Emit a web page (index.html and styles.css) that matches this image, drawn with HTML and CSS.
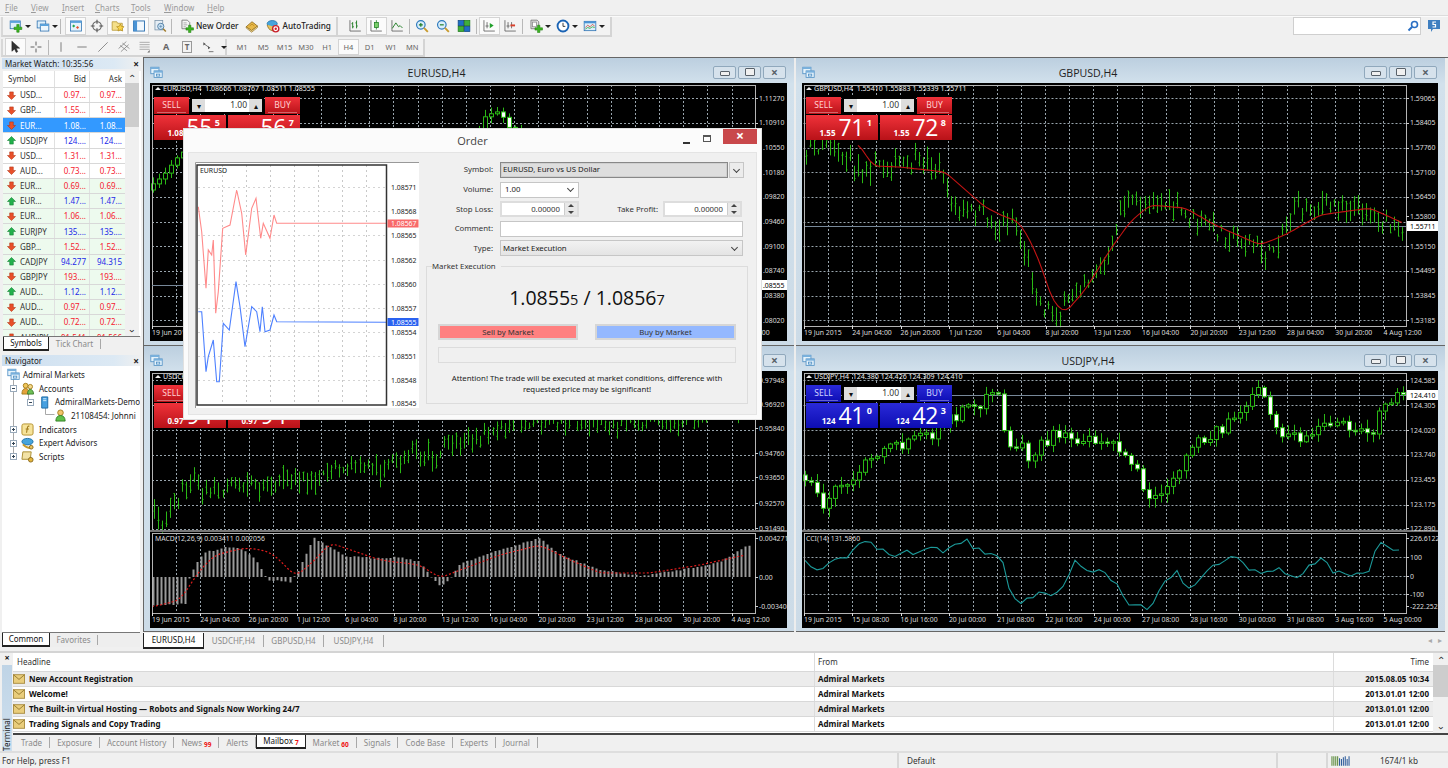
FILE: index.html
```html
<!DOCTYPE html>
<html lang="en">
<head>
<meta charset="utf-8">
<title>MetaTrader 4</title>
<link rel="stylesheet" href="styles.css">
</head>
<body>
<svg class="defs" aria-hidden="true">
  <symbol id="i-up" viewBox="0 0 10 10"><path d="M5 .5 9.500 5H7v4H3V5H.5z" fill="#22b14c" stroke="#0d7a2e" stroke-width=".6"/></symbol>
  <symbol id="i-down" viewBox="0 0 10 10"><path d="M5 9.500 .5 5H3V1h4v4h2.500z" fill="#e8502a" stroke="#b03010" stroke-width=".6"/></symbol>
  <symbol id="i-newchart" viewBox="0 0 18 18"><rect x="1.500" y="2.500" width="13" height="10" fill="#dff0fb" stroke="#2a6fb0"/><rect x="1.500" y="2.500" width="13" height="2.500" fill="#5aa2dc"/><path d="M10 7h3v3.500h3.500v3H13V17h-3v-3.500H6.500v-3H10z" fill="#3cb521" stroke="#1c7d0c" stroke-width=".7"/></symbol>
  <symbol id="i-profile" viewBox="0 0 18 18"><rect x="1.500" y="2.500" width="11" height="9" fill="#dff0fb" stroke="#2a6fb0"/><rect x="5.500" y="6.500" width="11" height="9" fill="#eef7fd" stroke="#2a6fb0"/><rect x="5.500" y="6.500" width="11" height="2.500" fill="#5aa2dc"/></symbol>
  <symbol id="i-watch" viewBox="0 0 18 18"><rect x="2" y="2.500" width="14" height="13" fill="#e6f3fb" stroke="#2a6fb0"/><rect x="2" y="2.500" width="14" height="2.500" fill="#5aa2dc"/><path d="M6 7l2 2-2 2-2-2z" fill="#22a94c"/><path d="M11 9l2 2-2 2-2-2z" fill="#e8502a"/></symbol>
  <symbol id="i-cross" viewBox="0 0 18 18"><circle cx="9" cy="9" r="5.500" fill="none" stroke="#666" stroke-width="1.500"/><path d="M9 1v5M9 12v5M1 9h5M12 9h5" stroke="#555" stroke-width="1.500"/></symbol>
  <symbol id="i-nav" viewBox="0 0 18 18"><path d="M1.500 3.500h6l1 2h6v9h-13z" fill="#f4df8a" stroke="#b59532"/><path d="M12 6.500l1.500 3 3.300.4-2.400 2.300.6 3.300-3-1.600-3 1.600.6-3.300-2.400-2.300 3.300-.4z" fill="#f8d34a" stroke="#ae8414" stroke-width=".8"/></symbol>
  <symbol id="i-term" viewBox="0 0 18 18"><rect x="2" y="2.500" width="14" height="13" fill="#f2f8fd" stroke="#2a6fb0" stroke-width="1.200"/><rect x="2" y="2.500" width="4.500" height="13" fill="#4a93d4"/></symbol>
  <symbol id="i-tester" viewBox="0 0 18 18"><rect x="2.500" y="2" width="10" height="12" fill="#e6eef5" stroke="#7a93a8"/><circle cx="10" cy="9.500" r="4" fill="#cfe6f7" stroke="#4f7da3" stroke-width="1.200"/><path d="M13 12.500l3.500 3.500" stroke="#a07a2a" stroke-width="2"/><path d="M8 9.500h4M10 7.500v4" stroke="#4f7da3" stroke-width=".8"/></symbol>
  <symbol id="i-order" viewBox="0 0 18 18"><path d="M2.500 1.500h7l3 3v8h-10z" fill="#f4f4f4" stroke="#6b6b6b"/><path d="M4.500 5h4M4.500 7.500h5M4.500 10h3" stroke="#9a9a9a"/><path d="M11 8h3v3.300h3.300v3H14V17.500h-3v-3.200H7.700v-3H11z" fill="#3cb521" stroke="#1c7d0c" stroke-width=".7"/></symbol>
  <symbol id="i-book" viewBox="0 0 18 18"><path d="M1.500 10 9 3.500l7 5.500-7.500 6z" fill="#e8b94a" stroke="#8a6414"/><path d="M1.500 10v1.500l7 5.500 7.500-6V9l-7.500 6z" fill="#f6e5a8" stroke="#8a6414" stroke-width=".8"/><path d="M6 9l3-2.500 3 2.500" stroke="#b8871c" fill="none"/></symbol>
  <symbol id="i-auto" viewBox="0 0 18 18"><ellipse cx="8" cy="6" rx="6.500" ry="4" fill="#46a4dc" stroke="#1d6fa6"/><path d="M1.500 7.500c1 3.500 2 6.500 6.500 7.500 3 0 5-1 6-4" fill="#e9c25a" stroke="#8a6a1e"/><circle cx="12.500" cy="12.500" r="4" fill="#fff" stroke="#c9202a" stroke-width="1.800"/><circle cx="12.500" cy="12.500" r="1.500" fill="#c9202a"/></symbol>
  <symbol id="i-bars" viewBox="0 0 18 18"><path d="M2.500 1.500v14h14" fill="none" stroke="#555"/><path d="M6 4v8M4.500 6H6M6 10h1.500M11 2v10M9.500 5H11M11 9h1.500" stroke="#1f7d24" stroke-width="1.200" fill="none"/></symbol>
  <symbol id="i-candle" viewBox="0 0 18 18"><path d="M2.500 1.500v14h14" fill="none" stroke="#555"/><path d="M9.500 1.500v12" stroke="#1f7d24"/><rect x="7" y="4.500" width="5" height="6.500" fill="#7bd06a" stroke="#1f7d24"/></symbol>
  <symbol id="i-line" viewBox="0 0 18 18"><path d="M2.500 1.500v14h14" fill="none" stroke="#555"/><path d="M3 12 7.500 5l3.500 5 2-1.500 3 3" fill="none" stroke="#1f7d24" stroke-width="1.200"/></symbol>
  <symbol id="i-zin" viewBox="0 0 18 18"><circle cx="7.500" cy="7.500" r="5.500" fill="#d9eefc" stroke="#2b78bc" stroke-width="1.500"/><path d="M5 7.500h5M7.500 5v5" stroke="#1f7d24" stroke-width="1.500"/><path d="M11.500 11.500l5 5" stroke="#c79a2c" stroke-width="2.400"/></symbol>
  <symbol id="i-zout" viewBox="0 0 18 18"><circle cx="7.500" cy="7.500" r="5.500" fill="#d9eefc" stroke="#2b78bc" stroke-width="1.500"/><path d="M5 7.500h5" stroke="#1f7d24" stroke-width="1.500"/><path d="M11.500 11.500l5 5" stroke="#c79a2c" stroke-width="2.400"/></symbol>
  <symbol id="i-tile" viewBox="0 0 18 18"><rect x="1.500" y="2" width="7" height="6.500" fill="#1d6fc4" stroke="#124a86"/><rect x="9.500" y="2" width="7" height="6.500" fill="#3fae3a" stroke="#217c1e"/><rect x="1.500" y="9.500" width="7" height="6.500" fill="#3fae3a" stroke="#217c1e"/><rect x="9.500" y="9.500" width="7" height="6.500" fill="#1d6fc4" stroke="#124a86"/></symbol>
  <symbol id="i-scroll" viewBox="0 0 18 18"><path d="M2.500 1.500v14h14" fill="none" stroke="#555"/><path d="M6.500 4v8M4.500 9h4" stroke="#555"/><path d="M10 5l5 3.500-5 3.500z" fill="#22a02c"/></symbol>
  <symbol id="i-shift" viewBox="0 0 18 18"><path d="M2.500 1.500v14h14" fill="none" stroke="#555"/><path d="M6.500 4v8M4.500 9h4" stroke="#555"/><path d="M11 4v8" stroke="#555"/><path d="M9.500 7h6v2.500h-6z" fill="#d8402c"/></symbol>
  <symbol id="i-ind" viewBox="0 0 18 18"><path d="M2.500 1.500h8l2 2v9h-10z" fill="#e3e3e3" stroke="#6b6b6b"/><rect x="4.500" y="4" width="5" height="6" fill="#fff" stroke="#888"/><path d="M11 8h3v3.300h3.300v3H14V17.500h-3v-3.200H7.700v-3H11z" fill="#3cb521" stroke="#1c7d0c" stroke-width=".7"/></symbol>
  <symbol id="i-clock" viewBox="0 0 18 18"><circle cx="9" cy="9" r="7" fill="#fff" stroke="#1a63b4" stroke-width="2.400"/><path d="M9 5v4.500h3" fill="none" stroke="#333" stroke-width="1.200"/></symbol>
  <symbol id="i-tpl" viewBox="0 0 18 18"><rect x="1.500" y="3" width="15" height="12" fill="#dbeffc" stroke="#2a6fb0"/><rect x="1.500" y="3" width="15" height="2.500" fill="#4a93d4"/><path d="M3 11l3-3 3 2 3-3 3 2" fill="none" stroke="#d8402c"/><path d="M3 13l3-2 3 1 3-2 3 1" fill="none" stroke="#27a02c"/></symbol>
  <symbol id="i-arrow" viewBox="0 0 18 18"><path d="M5 1.500v13l3.500-3 2 4.500 2-1-2-4.500h4.500z" fill="#333" stroke="#111" stroke-width=".6"/></symbol>
  <symbol id="i-plus" viewBox="0 0 18 18"><path d="M9 2v5M9 11v5M2 9h5M11 9h5" stroke="#555" stroke-width="1.200"/></symbol>
  <symbol id="i-vline" viewBox="0 0 18 18"><path d="M9 3v12" stroke="#888" stroke-width="1.400"/></symbol>
  <symbol id="i-hline" viewBox="0 0 18 18"><path d="M3 9h12" stroke="#888" stroke-width="1.400"/></symbol>
  <symbol id="i-trend" viewBox="0 0 18 18"><path d="M3 15 15 3" stroke="#888" stroke-width="1.200"/></symbol>
  <symbol id="i-chan" viewBox="0 0 18 18"><path d="M2 11 12 2M5 15 15 6M4 7l9 7M7 4l9 7" stroke="#777" stroke-width=".9"/></symbol>
  <symbol id="i-fib" viewBox="0 0 18 18"><path d="M2 3h13M2 6h13M2 9h13M2 12h13" stroke="#999"/><path d="M12 16l3-3v3z" fill="#666"/></symbol>
  <symbol id="i-shapes" viewBox="0 0 18 18"><path d="M3 3l3 2-3 2zM9 8l3 2-3 2z" fill="#555"/><path d="M4 5l7 5M10 15h6" stroke="#555"/></symbol>
  <symbol id="i-wins" viewBox="0 0 16 16"><rect x="1" y="1.500" width="10" height="8" fill="#e6f3fb" stroke="#4f8fc4"/><rect x="5" y="6" width="10" height="8" fill="#e6f3fb" stroke="#4f8fc4"/><rect x="5" y="6" width="10" height="2.200" fill="#78b0dc"/><rect x="1" y="1.500" width="10" height="2.200" fill="#78b0dc"/><rect x="8" y="10" width="4" height="2.400" fill="none" stroke="#4f8fc4"/></symbol>
  <symbol id="i-mail" viewBox="0 0 14 11"><rect x=".5" y=".5" width="13" height="10" fill="#e9cd7c" stroke="#a58637"/><path d="M.5.500 7 6l6.500-5.500" fill="none" stroke="#8f7428"/></symbol>
  <symbol id="i-users" viewBox="0 0 14 14"><circle cx="5" cy="4" r="2.600" fill="#f0c65a" stroke="#a47c1c"/><path d="M1 13c0-4 1.500-6 4-6s4 2 4 6z" fill="#e5a23a" stroke="#a47c1c"/><circle cx="10" cy="5" r="2.400" fill="#f4d98c" stroke="#a47c1c"/><path d="M7 13c0-3 1-5 3-5s3.500 2 3.500 5z" fill="#6fbf55" stroke="#3e7d2a"/></symbol>
  <symbol id="i-server" viewBox="0 0 14 14"><path d="M4 1h6.500v12H4z" fill="#46a0e0" stroke="#1c6aa4"/><path d="M5.500 3h3.500M5.500 5h3.500" stroke="#d8eefb"/></symbol>
  <symbol id="i-user" viewBox="0 0 14 14"><circle cx="7" cy="4" r="3" fill="#f2c46a" stroke="#a47c1c"/><path d="M2 13c0-4 2-6 5-6s5 2 5 6z" fill="#5fc04a" stroke="#337f25"/></symbol>
  <symbol id="i-func" viewBox="0 0 14 14"><rect x="1" y="1" width="12" height="12" rx="2" fill="#f6e39a" stroke="#b28f2a"/><path d="M9 3.500C7.500 3 7 4 6.800 5.500L6 10.500" fill="none" stroke="#9a7416" stroke-width="1.100"/><path d="M5 6.500h3.500" stroke="#9a7416"/></symbol>
  <symbol id="i-ea" viewBox="0 0 14 14"><ellipse cx="7" cy="5" rx="6" ry="3.500" fill="#46a4dc" stroke="#1d6fa6"/><path d="M2 8c2 2 4 4 8 4" fill="none" stroke="#c79a2c" stroke-width="2"/><circle cx="11" cy="11" r="2" fill="#e9c25a" stroke="#8a6a1e"/></symbol>
  <symbol id="i-script" viewBox="0 0 14 14"><path d="M2 2h9l-1 8H1z" fill="#f2e2a6" stroke="#a88a2e"/><circle cx="10.500" cy="10.500" r="2.500" fill="#e5b63c" stroke="#8a6a1e"/></symbol>
</svg>

<nav class="menu">
  <span><u>F</u>ile</span><span><u>V</u>iew</span><span><u>I</u>nsert</span><span><u>C</u>harts</span><span><u>T</u>ools</span><span><u>W</u>indow</span><span><u>H</u>elp</span>
</nav>

<div class="toolrow">
  <div class="tb tb-a">
    <svg class="ti"><use href="#i-newchart"/></svg><i class="drop"></i>
    <svg class="ti t2"><use href="#i-profile"/></svg><i class="drop"></i><b class="sep"></b>
    <span class="btn on"><svg class="ti"><use href="#i-watch"/></svg></span>
    <span class="btn"><svg class="ti"><use href="#i-cross"/></svg></span>
    <span class="btn on"><svg class="ti"><use href="#i-nav"/></svg></span>
    <span class="btn on"><svg class="ti"><use href="#i-term"/></svg></span>
    <span class="btn"><svg class="ti"><use href="#i-tester"/></svg></span><b class="sep"></b>
    <span class="labeled"><svg class="ti"><use href="#i-order"/></svg>New Order</span>
    <span class="btn"><svg class="ti"><use href="#i-book"/></svg></span>
    <span class="labeled la2"><svg class="ti"><use href="#i-auto"/></svg>AutoTrading</span>
  </div>
  <div class="tb tb-b">
    <span class="btn"><svg class="ti"><use href="#i-bars"/></svg></span>
    <span class="btn on"><svg class="ti"><use href="#i-candle"/></svg></span>
    <span class="btn"><svg class="ti"><use href="#i-line"/></svg></span><b class="sep"></b>
    <span class="btn"><svg class="ti"><use href="#i-zin"/></svg></span>
    <span class="btn"><svg class="ti"><use href="#i-zout"/></svg></span>
    <span class="btn"><svg class="ti"><use href="#i-tile"/></svg></span><b class="sep"></b>
    <span class="btn on"><svg class="ti"><use href="#i-scroll"/></svg></span>
    <span class="btn"><svg class="ti"><use href="#i-shift"/></svg></span><b class="sep"></b>
    <svg class="ti t2"><use href="#i-ind"/></svg><i class="drop"></i>
    <svg class="ti t2"><use href="#i-clock"/></svg><i class="drop"></i>
    <svg class="ti t2"><use href="#i-tpl"/></svg><i class="drop"></i>
  </div>
  <div class="search">
    <div class="search-box"><svg class="mag" viewBox="0 0 12 12"><circle cx="7.500" cy="4.500" r="3" fill="#fff" stroke="#2a6fc4" stroke-width="1.600"/><path d="M5 7 1.500 10.500" stroke="#2a6fc4" stroke-width="2"/></svg></div>
    <svg class="chat" viewBox="0 0 14 14"><path d="M1 1h12v9H6l-2 3v-3H1z" fill="#3f7fc0"/><path d="M9 3H6v2.500h2.500V8H5.500" fill="none" stroke="#fff" stroke-width="1.200"/></svg>
  </div>
</div>

<div class="toolrow row2">
  <div class="tb tb-c">
    <span class="btn on"><svg class="ti"><use href="#i-arrow"/></svg></span>
    <span class="btn"><svg class="ti"><use href="#i-plus"/></svg></span><b class="sep"></b>
    <span class="btn"><svg class="ti"><use href="#i-vline"/></svg></span>
    <span class="btn"><svg class="ti"><use href="#i-hline"/></svg></span>
    <span class="btn"><svg class="ti"><use href="#i-trend"/></svg></span>
    <span class="btn"><svg class="ti"><use href="#i-chan"/></svg></span>
    <span class="btn"><svg class="ti"><use href="#i-fib"/></svg></span>
    <span class="btn tx">A</span>
    <span class="btn tx boxed"><em>T</em></span>
    <span class="btn"><svg class="ti"><use href="#i-shapes"/></svg></span><i class="drop"></i>
  </div>
  <div class="tb tb-d">
    <span class="tf">M1</span><span class="tf">M5</span><span class="tf">M15</span><span class="tf">M30</span><span class="tf">H1</span><span class="tf on">H4</span><span class="tf">D1</span><span class="tf">W1</span><span class="tf">MN</span>
  </div>
</div>

<main class="main">
  <aside class="left">
    <section class="watch">
      <div class="dock-title"><span>Market Watch: 10:35:56</span><b>×</b></div>
      <div class="watch-body">
        <div class="mw">
          <div class="mw-row mw-head"><span class="c1">Symbol</span><span class="c2">Bid</span><span class="c3">Ask</span></div>
          <div class="mw-row dn"><span class="c1"><svg class="ar"><use href="#i-down"/></svg>USD...</span><span class="c2">0.97...</span><span class="c3">0.97...</span></div>
          <div class="mw-row dn"><span class="c1"><svg class="ar"><use href="#i-down"/></svg>GBP...</span><span class="c2">1.55...</span><span class="c3">1.55...</span></div>
          <div class="mw-row sel"><span class="c1"><svg class="ar"><use href="#i-down"/></svg>EUR...</span><span class="c2">1.08...</span><span class="c3">1.08...</span></div>
          <div class="mw-row upx"><span class="c1"><svg class="ar"><use href="#i-up"/></svg>USDJPY</span><span class="c2">124....</span><span class="c3">124....</span></div>
          <div class="mw-row dn"><span class="c1"><svg class="ar"><use href="#i-down"/></svg>USD...</span><span class="c2">1.31...</span><span class="c3">1.31...</span></div>
          <div class="mw-row dn"><span class="c1"><svg class="ar"><use href="#i-down"/></svg>AUD...</span><span class="c2">0.73...</span><span class="c3">0.73...</span></div>
          <div class="mw-row dn gr"><span class="c1"><svg class="ar"><use href="#i-down"/></svg>EUR...</span><span class="c2">0.69...</span><span class="c3">0.69...</span></div>
          <div class="mw-row upx gr"><span class="c1"><svg class="ar"><use href="#i-up"/></svg>EUR...</span><span class="c2">1.47...</span><span class="c3">1.47...</span></div>
          <div class="mw-row dn gr"><span class="c1"><svg class="ar"><use href="#i-down"/></svg>EUR...</span><span class="c2">1.06...</span><span class="c3">1.06...</span></div>
          <div class="mw-row upx gr"><span class="c1"><svg class="ar"><use href="#i-up"/></svg>EURJPY</span><span class="c2">135....</span><span class="c3">135....</span></div>
          <div class="mw-row dn gr"><span class="c1"><svg class="ar"><use href="#i-down"/></svg>GBP...</span><span class="c2">1.52...</span><span class="c3">1.52...</span></div>
          <div class="mw-row upx gr"><span class="c1"><svg class="ar"><use href="#i-up"/></svg>CADJPY</span><span class="c2">94.277</span><span class="c3">94.315</span></div>
          <div class="mw-row dn gr"><span class="c1"><svg class="ar"><use href="#i-down"/></svg>GBPJPY</span><span class="c2">193....</span><span class="c3">193....</span></div>
          <div class="mw-row upx gr"><span class="c1"><svg class="ar"><use href="#i-up"/></svg>AUD...</span><span class="c2">1.12...</span><span class="c3">1.12...</span></div>
          <div class="mw-row dn gr"><span class="c1"><svg class="ar"><use href="#i-down"/></svg>AUD...</span><span class="c2">0.97...</span><span class="c3">0.97...</span></div>
          <div class="mw-row dn gr"><span class="c1"><svg class="ar"><use href="#i-down"/></svg>AUD...</span><span class="c2">0.72...</span><span class="c3">0.72...</span></div>
          <div class="mw-row dn gr"><span class="c1"><svg class="ar"><use href="#i-down"/></svg>AUDJPY</span><span class="c2">91.541</span><span class="c3">91.566</span></div>
        </div>
        <div class="vscroll mw-scroll"><span class="chev">⌃</span><span class="thumb"></span><span class="chev dnc">⌃</span></div>
      </div>
      <div class="tabs dock-tabs"><span class="tab on">Symbols</span><span class="tab">Tick Chart</span><span class="tab-end"></span></div>
    </section>
    <section class="navigator">
      <div class="dock-title"><span>Navigator</span><b>×</b></div>
      <div class="tree">
        <svg class="tree-lines" viewBox="0 0 138 100"><path d="M11.500 12v76M11.500 20.500h2M26.500 27v6.500h3M43.500 40v7.500h9M11.500 61.500h2M11.500 75h2M11.500 88.500h2" fill="none" stroke="#a8a8a8"/></svg>
        <div class="node n0"><svg class="ni"><use href="#i-wins"/></svg>Admiral Markets</div>
        <div class="node n1"><i class="box minus"></i><svg class="ni"><use href="#i-users"/></svg>Accounts</div>
        <div class="node n2"><i class="box minus"></i><svg class="ni"><use href="#i-server"/></svg>AdmiralMarkets-Demo</div>
        <div class="node n3"><svg class="ni"><use href="#i-user"/></svg>21108454: Johnni</div>
        <div class="node n1"><i class="box plus"></i><svg class="ni"><use href="#i-func"/></svg>Indicators</div>
        <div class="node n1"><i class="box plus"></i><svg class="ni"><use href="#i-ea"/></svg>Expert Advisors</div>
        <div class="node n1"><i class="box plus"></i><svg class="ni"><use href="#i-script"/></svg>Scripts</div>
      </div>
      <div class="tabs nav-tabs"><span class="tab on">Common</span><span class="tab">Favorites</span><span class="tab-end"></span></div>
    </section>
  </aside>

  <div class="work">
    <div class="mdi">
      <section class="win">
        <header class="win-title"><svg class="win-ic"><use href="#i-wins"/></svg><span>EURUSD,H4</span><div class="win-btns"><i class="wb wb-min"></i><i class="wb wb-max"></i><i class="wb wb-x">×</i></div></header>
        <div class="chart"><svg class="plot" id="c1"></svg>
          <div class="trade red">
            <span class="side">SELL</span><span class="spin"><i>▾</i><em>1.00</em><i>▴</i></span><span class="side">BUY</span>
            <span class="quote q1"><small>1.08</small><big>55</big><sup>5</sup></span><span class="quote q2"><small>1.08</small><big>56</big><sup>7</sup></span>
          </div>
        </div>
      </section>
      <section class="win">
        <header class="win-title"><svg class="win-ic"><use href="#i-wins"/></svg><span>GBPUSD,H4</span><div class="win-btns"><i class="wb wb-min"></i><i class="wb wb-max"></i><i class="wb wb-x">×</i></div></header>
        <div class="chart"><svg class="plot" id="c2"></svg>
          <div class="trade red">
            <span class="side">SELL</span><span class="spin"><i>▾</i><em>1.00</em><i>▴</i></span><span class="side">BUY</span>
            <span class="quote q1"><small>1.55</small><big>71</big><sup>1</sup></span><span class="quote q2"><small>1.55</small><big>72</big><sup>8</sup></span>
          </div>
        </div>
      </section>
      <section class="win low">
        <header class="win-title"><svg class="win-ic"><use href="#i-wins"/></svg><span>USDCHF,H4</span><div class="win-btns"><i class="wb wb-min"></i><i class="wb wb-max"></i><i class="wb wb-x">×</i></div></header>
        <div class="chart"><svg class="plot" id="c3"></svg>
          <div class="trade red">
            <span class="side">SELL</span><span class="spin"><i>▾</i><em>1.00</em><i>▴</i></span><span class="side">BUY</span>
            <span class="quote q1"><small>0.97</small><big>94</big><sup>1</sup></span><span class="quote q2"><small>0.97</small><big>94</big><sup>8</sup></span>
          </div>
        </div>
      </section>
      <section class="win low">
        <header class="win-title"><svg class="win-ic"><use href="#i-wins"/></svg><span>USDJPY,H4</span><div class="win-btns"><i class="wb wb-min"></i><i class="wb wb-max"></i><i class="wb wb-x">×</i></div></header>
        <div class="chart"><svg class="plot" id="c4"></svg>
          <div class="trade blue">
            <span class="side">SELL</span><span class="spin"><i>▾</i><em>1.00</em><i>▴</i></span><span class="side">BUY</span>
            <span class="quote q1"><small>124</small><big>41</big><sup>0</sup></span><span class="quote q2"><small>124</small><big>42</big><sup>3</sup></span>
          </div>
        </div>
      </section>
    </div>
    <div class="tabs chart-tabs"><span class="tab on">EURUSD,H4</span><span class="tab">USDCHF,H4</span><span class="tab">GBPUSD,H4</span><span class="tab">USDJPY,H4</span><span class="tab-end"></span><span class="pager">◂ &nbsp; ▸</span></div>
  </div>
</main>

<section class="terminal">
  <div class="term-side"><b>×</b><span>Terminal</span></div>
  <div class="term-main">
    <div class="term-list">
      <div class="term-table">
        <div class="tr th"><span class="t1">Headline</span><span class="t2c">From</span><span class="t3">Time</span></div>
        <div class="tr g"><span class="t1"><svg class="mail"><use href="#i-mail"/></svg>New Account Registration</span><span class="t2c">Admiral Markets</span><span class="t3">2015.08.05 10:34</span></div>
        <div class="tr"><span class="t1"><svg class="mail"><use href="#i-mail"/></svg>Welcome!</span><span class="t2c">Admiral Markets</span><span class="t3">2013.01.01 12:00</span></div>
        <div class="tr g"><span class="t1"><svg class="mail"><use href="#i-mail"/></svg>The Built-in Virtual Hosting — Robots and Signals Now Working 24/7</span><span class="t2c">Admiral Markets</span><span class="t3">2013.01.01 12:00</span></div>
        <div class="tr"><span class="t1"><svg class="mail"><use href="#i-mail"/></svg>Trading Signals and Copy Trading</span><span class="t2c">Admiral Markets</span><span class="t3">2013.01.01 12:00</span></div>
      </div>
      <div class="vscroll term-scroll"><span class="chev">⌃</span><span class="thumb"></span><span class="chev dnc">⌃</span></div>
    </div>
    <div class="tabs term-tabs">
      <span class="tab">Trade</span><span class="tab">Exposure</span><span class="tab">Account History</span><span class="tab">News<sub>99</sub></span><span class="tab">Alerts</span><span class="tab on">Mailbox<sub>7</sub></span><span class="tab">Market<sub>60</sub></span><span class="tab">Signals</span><span class="tab">Code Base</span><span class="tab">Experts</span><span class="tab">Journal</span>
    </div>
  </div>
</section>

<footer class="status">
  <span class="st-help">For Help, press F1</span>
  <span class="st-profile">Default</span>
  <span class="st-gap"></span>
  <span class="st-conn"><svg class="st-bars" viewBox="0 0 20 10"><path d="M1 0v10M3 0v10M5 0v10M7 0v10" stroke="#5a8a3a" stroke-width="1.100"/><path d="M9 2v8M11 3v7M13 1v9M15 0v10M17 3v7M19 0v10" stroke="#2a5a9a" stroke-width="1.100"/></svg></span>
  <span class="st-kb">1674/1 kb</span>
</footer>

<div class="dialog">
  <div class="dlg-title"><span>Order</span>
    <div class="dlg-ctl"><i class="d-min"></i><i class="d-max"></i><i class="d-x">×</i></div>
  </div>
  <div class="dlg-body">
    <svg class="tick" id="tick" viewBox="195 162 224 246"></svg>
    <form class="form">
      <div class="frow"><label>Symbol:</label><div class="fld sym"><span>EURUSD, Euro vs US Dollar</span></div><div class="capbox"><i class="caret"></i></div></div>
      <div class="frow"><label>Volume:</label><div class="fld vol"><span>1.00</span><i class="caret"></i></div></div>
      <div class="frow"><label>Stop Loss:</label><div class="fld num"><span>0.00000</span><i class="spinb"></i></div><label class="lbl2">Take Profit:</label><div class="fld num"><span>0.00000</span><i class="spinb"></i></div></div>
      <div class="frow"><label>Comment:</label><div class="fld wide"></div></div>
      <div class="frow"><label>Type:</label><div class="fld wide typ"><span>Market Execution</span><i class="caret"></i></div></div>
      <fieldset class="exec">
        <legend>Market Execution</legend>
        <div class="price">1.0855<small>5</small> / 1.0856<small>7</small></div>
        <div class="act"><span class="do sell">Sell by Market</span><span class="do buy">Buy by Market</span></div>
        <div class="progress"></div>
        <p class="attn">Attention! The trade will be executed at market conditions, difference with<br>requested price may be significant!</p>
      </fieldset>
    </form>
  </div>
</div>

<script src="charts.js"></script>
</body>
</html>
```
FILE: styles.css
```css
* { box-sizing: border-box; }
html, body { margin: 0; padding: 0; }
body {
  position: relative;
  width: 1448px;
  height: 768px;
  overflow: hidden;
  background: #f0f0f0;
  font: 8px/1.2 "Noto Sans", Tahoma, sans-serif;
  color: #111;
  display: flex;
  flex-direction: column;
}
.defs { position: absolute; width: 0; height: 0; }

/* menu */
.menu {
  height: 16px;
  display: flex;
  align-items: center;
  padding-left: 5px;
  color: #9a9a9a;
  font-size: 8px;
  border-bottom: 1px solid #dcdcdc;
}
.menu u { text-decoration-thickness: 1px; }
.menu span:nth-child(1) { width: 26px; }
.menu span:nth-child(2) { width: 31px; }
.menu span:nth-child(3) { width: 33px; }
.menu span:nth-child(4) { width: 36px; }
.menu span:nth-child(5) { width: 33px; }
.menu span:nth-child(6) { width: 43px; }

/* toolbars */
.toolrow {
  height: 21px;
  display: flex;
  align-items: stretch;
  padding-left: 1px;
  border-top: 1px solid #fafafa;
}
.row2 { height: 20px; border-top: 0; padding-top: 2px; }
.tb {
  display: flex;
  align-items: center;
  flex: none;
  border-right: 2px solid #d4d4d4;
  border-bottom: 2px solid #d4d4d4;
  border-left: 2px solid #d8d8d8;
  background: #f3f3f3;
}
.tb-a { width: 337px; padding-left: 6px; }
.tb-b { width: 274px; padding-left: 6.5px; border-left: 0; }
.tb-c { width: 226px; padding-left: 1.5px; }
.tb-d { width: 198px; padding-left: 4.3px; border-left: 0; }
.ti { width: 14px; height: 14px; display: block; flex: none; }
.t2 { margin-left: 4px; }
.btn {
  width: 21px;
  height: 18px;
  display: flex;
  align-items: center;
  justify-content: center;
  flex: none;
}
.btn.on, .tf.on {
  background: #fbfbfb;
  outline: 1px solid #d4d4d4;
  outline-offset: -1px;
}
.drop {
  width: 0; height: 0; flex: none;
  margin: 0 1px 0 2px;
  border-left: 3px solid transparent;
  border-right: 3px solid transparent;
  border-top: 3px solid #222;
}
.sep { width: 1px; height: 15px; background: #b8b8b8; margin: 0 2px 0 1px; flex: none; }
.tb-a .sep { margin-right: 4px; }
.labeled { display: flex; align-items: center; gap: 2px; font-size: 8.2px; font-weight: 500; color: #222; padding: 0 3px 0 4px; white-space: nowrap; flex: none; }
.la2 { padding-left: 3px; gap: 3px; }
.tx { color: #666; font-size: 9px; font-weight: 700; }
.boxed em { font-style: normal; border: 1px solid #999; padding: 0 2px; font-size: 8px; line-height: 10px; }
.tf { width: 21.3px; height: 16px; display: flex; align-items: center; justify-content: center; color: #666; font-size: 7.5px; flex: none; }
.search { margin-left: auto; display: flex; align-items: center; gap: 6px; padding: 0 7px 2px 0; }
.search-box { width: 128px; height: 18px; background: #fff; border: 1px solid #cfcfcf; display: flex; align-items: center; justify-content: flex-end; padding-right: 1px; }
.mag { width: 12px; height: 12px; }
.chat { width: 14px; height: 14px; }

/* main */
.main { height: 594px; flex: none; display: flex; }
.left { width: 142px; flex: none; display: flex; flex-direction: column; padding-left: 1px; }
.work { flex: 1; min-width: 0; display: flex; flex-direction: column; padding-left: 1px; }
.dock-title {
  height: 11px;
  flex: none;
  display: flex;
  justify-content: space-between;
  align-items: center;
  padding: 0 1px 0 3px;
  margin: 1px 0 2px 1px;
  background: linear-gradient(90deg, #cddff0 0, #dce9f4 80%, #f0f0f0 100%);
  color: #222;
  font-size: 8px;
  white-space: nowrap;
}
.dock-title b { font-size: 10px; line-height: 10px; width: 10px; text-align: center; }

/* market watch */
.watch { height: 295px; flex: none; display: flex; flex-direction: column; }
.watch-body { display: flex; margin: 0 1px 0 2px; height: 265px; flex: none; overflow: hidden; background: #fff; }
.mw { width: 122px; flex: none; overflow: hidden; }
.mw-row { display: flex; height: 15.15px; align-items: center; border-bottom: 1px solid #d8d8d8; font-size: 8px; white-space: nowrap; background: #fff; }
.mw-row.gr { background: #edfaee; }
.mw-head { height: 17px; color: #333; background: #fff; }
.mw-row span { display: flex; align-items: center; height: 100%; border-right: 1px solid #e0e0e0; }
.c1 { width: 52px; padding-left: 1px; color: #333; }
.mw-head .c1 { padding-left: 5px; }
.c2 { width: 35px; justify-content: flex-end; padding-right: 3px; }
.c3 { width: 35px; justify-content: flex-end; padding-right: 3px; border-right: 0 !important; }
.ar { width: 9px; height: 9px; margin: 0 4px 0 3px; flex: none; }
.dn .c2, .dn .c3 { color: #f5202e; }
.upx .c2, .upx .c3 { color: #2228e8; }
.sel { background: #3399ff; }
.sel span { color: #fff !important; border-right-color: #3399ff; }
.vscroll { display: flex; flex-direction: column; align-items: center; background: #f0f0f0; flex: none; }
.chev { height: 12px; font-size: 10px; line-height: 14px; color: #333; }
.dnc { transform: rotate(180deg); }
.thumb { background: #cdcdcd; width: 100%; }
.mw-scroll { width: 14px; height: 265px; }
.mw-scroll .thumb { height: 44px; }
.mw-scroll .dnc { margin-top: auto; }

/* tabs */
.tabs { display: flex; align-items: stretch; color: #8a8a8a; white-space: nowrap; flex: none; }
.tab { display: flex; align-items: center; justify-content: center; border-right: 1px solid #a8a8a8; margin: 2px 0; }
.tab.on { margin: 0; background: #fff; color: #111; border: 1px solid #222; border-top: 0; border-bottom-width: 2px; }
.dock-tabs { height: 15px; margin: 0 2px; border-top: 1px solid #777; font-size: 8px; }
.dock-tabs .tab { width: 46px; }
.dock-tabs .tab + .tab { width: 52px; }

/* navigator */
.navigator { height: 299px; flex: none; display: flex; flex-direction: column; }
.navigator .dock-title { margin-top: 3px; margin-bottom: 0; }
.tree { position: relative; flex: 1; background: #fff; margin: 0 2px 0 1px; padding-top: 2px; font-size: 8px; overflow: hidden; color: #222; }
.tree-lines { position: absolute; left: 0; top: 1px; width: 138px; height: 100px; }
.node { position: relative; height: 13.67px; display: flex; align-items: center; white-space: nowrap; }
.n0 { padding-left: 5px; }
.n1 { padding-left: 8px; }
.n2 { padding-left: 25px; }
.n3 { padding-left: 52px; }
.ni { width: 13px; height: 13px; margin-right: 5px; flex: none; }
.n0 .ni { margin-right: 3px; }
.n2 .ni, .n3 .ni { margin-right: 4px; }
.box { width: 7px; height: 7px; border: 1px solid #9ab; background: #fff; margin-right: 4px; flex: none; position: relative; }
.box::before { content: ""; position: absolute; left: 1px; top: 2px; width: 3px; height: 1px; background: #345; }
.box.plus::after { content: ""; position: absolute; left: 2px; top: 1px; width: 1px; height: 3px; background: #345; }
.nav-tabs { height: 15px; margin: 0 2px 4px 1px; font-size: 8px; background: #eee; border-top: 1px solid #777; }
.nav-tabs .tab { width: 48px; }

/* mdi */
.mdi {
  height: 575px;
  flex: none;
  display: grid;
  grid-template-columns: 652px 652px;
  grid-template-rows: 288px 286px;
  background: #ededed;
  border-top: 1px solid #666;
  border-left: 1px solid #666;
}
.win {
  background: linear-gradient(180deg, #bccfdf 0, #d2e1ec 26px, #ccdbe7 100%);
  padding: 0 7px 4px 6px;
  margin-right: 2px;
  border-bottom: 1px solid #666;
  display: flex;
  flex-direction: column;
  min-height: 0;
}
.win:nth-child(even) { padding-right: 7px; margin-right: 3px; }
.win.low { padding-bottom: 3px; }
.win-title { height: 25px; flex: none; position: relative; display: flex; align-items: center; justify-content: center; padding: 4px 64px 0 0; font: 10.6px "Open Sans", sans-serif; color: #222; }
.win-ic { position: absolute; left: 0; top: 8px; width: 13px; height: 13px; }
.win-btns { position: absolute; right: 1px; top: 8px; display: flex; gap: 2px; }
.wb { width: 23px; height: 13px; border: 1px solid #90a8bc; border-radius: 2px; background: #d6e2ec; display: flex; align-items: center; justify-content: center; font-style: normal; color: #58616a; font-size: 12px; line-height: 10px; font-weight: 700; }
.wb-min::before { content: ""; width: 8px; height: 3px; margin-top: 2px; border: 1px solid #58616a; background: #f0f0f0; border-radius: 1px; }
.wb-max::before { content: ""; width: 8px; height: 6px; margin-top: -2px; border: 1px solid #58616a; background: #f0f0f0; border-radius: 1px; }
.chart { position: relative; flex: 1; background: #000; overflow: hidden; min-height: 0; }
.plot { display: block; width: 100%; height: 100%; font-family: "Noto Sans", Tahoma, sans-serif; }
.trade { position: absolute; left: 4px; top: 14px; width: 146px; display: grid; grid-template-columns: 36px 37px 37px 36px; grid-template-rows: 17px 26px; color: #fff; }
.side { display: flex; align-items: center; justify-content: center; font-size: 8.5px; color: #ffd0d0; position: relative; margin-right: 1px; }
.trade .side:nth-child(3) { margin: 0 0 0 1px; grid-column: 4; }
.side::after { content: ""; position: absolute; left: 3px; right: 3px; bottom: 1px; height: 1px; background: rgba(255,255,255,.35); }
.red .side, .red .quote { background: linear-gradient(180deg, #f0323a, #b81218); }
.blue .side, .blue .quote { background: linear-gradient(180deg, #2a2ad8, #0d0db4); }
.blue .side { color: #cfd4ff; }
.spin { grid-column: 2 / span 2; display: flex; background: #fff; border: 2px solid #000; align-items: center; color: #333; }
.spin i { width: 13px; height: 100%; background: #ddd; display: flex; align-items: center; justify-content: center; font-style: normal; font-size: 8px; color: #111; }
.spin em { flex: 1; text-align: right; padding-right: 2px; font-style: normal; font-size: 8.5px; }
.quote { margin-top: 1px; height: 25px; display: flex; align-items: baseline; justify-content: flex-end; line-height: 25px; font-family: "Open Sans", sans-serif; padding-right: 6px; }
.q1 { grid-column: 1 / span 2; margin-right: 1px; }
.q2 { grid-column: 3 / span 2; margin-left: 1px; }
.quote small { font-size: 8px; font-weight: 700; margin-right: 3px; }
.quote big { font-size: 23px; line-height: 25px; letter-spacing: -.5px; }
.quote sup { font-size: 9px; font-weight: 700; line-height: 10px; align-self: flex-start; margin: 3px 0 0 3px; }

.chart-tabs { height: 19px; font-size: 8px; padding: 1px 0 2px; }
.chart-tabs .tab { width: 60px; }
.chart-tabs .tab.on { width: 61px; }
.pager { margin-left: auto; padding: 2px 6px 0; color: #aaa; font-size: 8px; }

/* terminal */
.terminal { height: 100px; flex: none; display: flex; border-top: 2px solid #d4d4d4; }
.term-side { width: 12px; flex: none; display: flex; flex-direction: column; align-items: center; margin-left: 1px; }
.term-side b { font-size: 9px; height: 12px; line-height: 10px; width: 11px; text-align: center; }
.term-side span { flex: 1; width: 10px; background: linear-gradient(180deg, #cfe0ee, #bfd4e6); writing-mode: vertical-rl; transform: rotate(180deg); font-size: 8px; color: #222; line-height: 10px; text-align: left; }
.term-main { flex: 1; display: flex; flex-direction: column; min-width: 0; }
.term-list { height: 82px; flex: none; display: flex; background: #fff; border-bottom: 2px solid #444; overflow: hidden; }
.term-table { flex: 1; min-width: 0; }
.tr { display: flex; height: 15px; align-items: center; font-weight: 700; font-size: 8px; border-bottom: 1px solid #d8d8d8; color: #111; white-space: nowrap; }
.tr.g { background: #ececec; }
.th { height: 19px; font-weight: 400; color: #333; }
.t1 { width: 801px; display: flex; align-items: center; height: 100%; }
.th .t1 { padding-left: 4px; }
.t2c { width: 519px; padding-left: 3px; height: 100%; display: flex; align-items: center; border-left: 1px solid #dcdcdc; }
.t3 { flex: 1; padding-right: 4px; height: 100%; display: flex; align-items: center; justify-content: flex-end; border-left: 1px solid #dcdcdc; }
.mail { width: 12px; height: 10px; margin-right: 4px; flex: none; }
.term-scroll { width: 15px; }
.term-scroll .thumb { height: 32px; }
.term-scroll .dnc { margin-top: auto; }
.term-tabs { height: 16px; font-size: 8px; }
.term-tabs .tab { padding: 0 7px; margin: 2px 0 3px; height: 11px; align-self: center; }
.term-tabs .tab:first-child { padding-left: 8px; }
.term-tabs .tab.on { height: 14px; padding: 0 6px; margin: 0; align-self: flex-start; border-top: 0; }
.tab sub { color: #ef1010; font-size: 6.5px; font-weight: 700; margin-left: 2px; vertical-align: baseline; position: relative; top: 2px; }

/* status */
.status { flex: 1; display: flex; align-items: center; font-size: 8.2px; color: #333; border-top: 2px solid #dedede; }
.status > span { height: 100%; display: flex; align-items: center; }
.st-help { width: 897px; padding-left: 2px; }
.st-profile { width: 379px; padding-left: 8px; border-left: 2px solid #d8d8d8; }
.st-gap { width: 50px; border-left: 2px solid #d8d8d8; }
.st-conn { width: 54px; padding-left: 3px; border-left: 2px solid #d8d8d8; }
.st-bars { width: 19px; height: 10px; }

/* dialog */
.dialog {
  position: absolute;
  left: 183px;
  top: 128px;
  width: 579px;
  height: 292px;
  background: #fbfbfb;
  border: 1px solid #e0e0e0;
  padding: 0 4px 4px;
  display: flex;
  flex-direction: column;
}
.dlg-title { height: 23px; flex: none; position: relative; display: flex; align-items: center; justify-content: center; font: 11px "Open Sans", sans-serif; color: #444; }
.dlg-ctl { position: absolute; right: 0; top: 0; display: flex; align-items: flex-start; }
.dlg-ctl i { display: block; font-style: normal; }
.d-min { width: 7px; height: 2px; background: #333; margin: 13px 13px 0 0; }
.d-max { width: 8px; height: 7px; border: 1px solid #555; border-top-width: 2px; margin: 6px 12px 0 0; }
.d-x { width: 34px; height: 15px; background: #c9484b; color: #fff; text-align: center; font-size: 14px; line-height: 14px; font-weight: 700; }
.dlg-body { flex: 1; display: flex; background: #f0f0f0; border: 1px solid #e4e4e4; padding: 9px 10px 0 6px; gap: 7px; }
.tick { width: 224px; height: 246px; flex: none; display: block; background: #fff; font-family: "Noto Sans", Tahoma, sans-serif; }
.form { width: 322px; font-size: 7.8px; color: #222; }
.frow { display: flex; align-items: center; height: 16px; margin-bottom: 3.6px; }
.frow label { width: 67px; text-align: right; margin-right: 7px; flex: none; color: #333; }
.frow .lbl2 { width: 79px; margin-right: 5px; }
.fld { height: 16px; background: #fff; border: 1px solid #c6c6c6; display: flex; align-items: center; padding: 0 4px; position: relative; }
.sym { width: 228px; background: #dedede; border: 1px solid #888; box-shadow: inset 0 0 0 1px #cfcfcf; padding-left: 2px; }
.capbox { width: 15px; height: 16px; margin-left: 1px; border: 1px solid #c6c6c6; background: #ececec; display: flex; align-items: center; justify-content: center; }
.vol { width: 79px; justify-content: space-between; }
.num { width: 79px; justify-content: flex-end; padding-right: 17px; border-width: 2px; border-color: #ddd; color: #333; }
.wide { width: 243px; }
.typ { background: linear-gradient(#f2f2f2, #e4e4e4); padding-left: 2px; justify-content: space-between; }
.caret { width: 7px; height: 7px; position: relative; flex: none; display: inline-block; }
.caret::before { content: ""; position: absolute; left: 1px; top: 0; width: 4px; height: 4px; border-right: 1.5px solid #444; border-bottom: 1.5px solid #444; transform: rotate(45deg); }
.spinb { position: absolute; right: 0; top: 0; width: 13px; height: 12px; background: #e8e8e8; border-left: 1px solid #ccc; }
.spinb::before, .spinb::after { content: ""; position: absolute; left: 3px; border-left: 3px solid transparent; border-right: 3px solid transparent; }
.spinb::before { top: 1px; border-bottom: 3px solid #444; }
.spinb::after { bottom: 1px; border-top: 3px solid #444; }
.exec { margin: 6px 0 0; padding: 0 11px; height: 142px; width: 322px; border: 1px solid #dcdcdc; min-width: 0; }
.exec legend { padding: 0 5px 0 0; margin-left: -6px; line-height: 9px; color: #333; }
.price { text-align: center; font-size: 19.500px; line-height: 24px; margin-top: 15px; color: #111; font-family: "Open Sans", sans-serif; }
.price small { font-size: 14.500px; }
.act { display: flex; justify-content: space-between; margin-top: 12px; }
.do { width: 140px; height: 16px; display: flex; align-items: center; justify-content: center; color: #333; border: 2px solid #d6d6d6; }
.sell { background: #ff8080; }
.buy { background: #94b8ff; width: 141px; }
.progress { height: 16px; margin-top: 7px; border: 1px solid #dcdcdc; }
.attn { margin: 10px 0 0; text-align: center; line-height: 11px; color: #222; white-space: nowrap; }
```
FILE: charts.js
```js
(function () {
  var FS = 6.9;
  var seed = 7;
  function rnd() { seed = (seed * 16807) % 2147483647; return seed / 2147483647; }
  function interp(pts, x) {
    if (x <= pts[0][0]) return pts[0][1];
    for (var i = 1; i < pts.length; i++) {
      if (x <= pts[i][0]) {
        var a = pts[i - 1], b = pts[i];
        return a[1] + (b[1] - a[1]) * (x - a[0]) / (b[0] - a[0]);
      }
    }
    return pts[pts.length - 1][1];
  }
  function fmt(n) { return Math.round(n * 10) / 10; }
  function smooth(pts, win) {
    var out = [], x0 = pts[0][0], x1 = pts[pts.length - 1][0];
    for (var x = x0; x <= x1; x += 4) {
      var s = 0, n = 0;
      for (var d = -win; d <= win; d += 2) { s += interp(pts, x + d); n++; }
      out.push([x, fmt(s / n)]);
    }
    return out;
  }
  function jitter(pts, step, amp) {
    var out = [], x0 = pts[0][0], x1 = pts[pts.length - 1][0];
    for (var x = x0; x <= x1; x += step) out.push([x, fmt(interp(pts, x) + (rnd() - 0.5) * amp)]);
    return out;
  }
  function grid(x0, x1, ys, top, bottom) {
    var s = '';
    for (var x = x0 + 24.15; x < x1 - 2; x += 24.15) s += 'M' + (Math.round(x) + 0.5) + ' ' + top + 'V' + bottom;
    ys.forEach(function (y) { s += 'M' + x0 + ' ' + (Math.round(y) + 0.5) + 'H' + x1; });
    return '<path d="' + s + '" stroke="#98a4ac" stroke-dasharray="2 2" fill="none"/>';
  }
  function bars(path, x0, x1, step, amp) {
    var s = '';
    for (var x = x0 + 2; x < x1 - 2; x += step) {
      var m = interp(path, x) + (rnd() - 0.5) * amp * 1.1;
      var h = m - (2 + rnd() * amp * 0.8), l = m + (2 + rnd() * amp * 0.8);
      var o = h + rnd() * (l - h), c = h + rnd() * (l - h);
      var X = Math.round(x) + 0.5;
      s += 'M' + X + ' ' + fmt(h) + 'V' + fmt(l) + 'M' + (X - 1) + ' ' + fmt(o) + 'H' + X + 'M' + X + ' ' + fmt(c) + 'H' + (X + 1);
    }
    return '<path d="' + s + '" stroke="#2ab815" fill="none"/>';
  }
  function candles(path, x0, x1, amp) {
    var s = '', prev = interp(path, x0);
    for (var x = x0 + 1; x < x1 - 2; x += 6.04) {
      var c = interp(path, x) + (rnd() - 0.5) * amp;
      var X = Math.round(x) + 0.5;
      var top = Math.min(prev, c), bot = Math.max(prev, c);
      if (bot - top < 1.5) bot = top + 1.5;
      s += '<path d="M' + X + ' ' + fmt(top - 1 - rnd() * amp * 0.6) + 'V' + fmt(bot + 1 + rnd() * amp * 0.6) + '" stroke="#2ab815"/>';
      s += '<rect x="' + (X - 2) + '" y="' + fmt(top) + '" width="4" height="' + fmt(bot - top) + '" fill="' + (c > prev ? '#fff' : '#000') + '" stroke="#2ab815"/>';
      prev = c;
    }
    return s;
  }
  function line(pts, color, w, dash) {
    return '<polyline points="' + pts.map(function (p) { return p.join(','); }).join(' ') + '" fill="none" stroke="' + color + '" stroke-width="' + (w || 1) + '"' + (dash ? ' stroke-dasharray="' + dash + '"' : '') + '/>';
  }
  function text(x, y, t) { return '<text x="' + x + '" y="' + y + '" font-size="' + FS + '" fill="#dcdcdc">' + t + '</text>'; }
  function axisY(x1, labels) {
    var s = '';
    labels.forEach(function (l) {
      if (l[2]) {
        s += '<rect x="' + (x1 + 1) + '" y="' + (l[1] - 5) + '" width="31" height="10" fill="#fff"/>';
        s += '<text x="' + (x1 + 4) + '" y="' + (l[1] + 2.500) + '" font-size="' + FS + '" fill="#000">' + l[0] + '</text>';
      } else {
        s += '<path d="M' + x1 + ' ' + (Math.round(l[1]) + 0.5) + 'h3" stroke="#ccc"/>' + text(x1 + 4, l[1] + 2.500, l[0]);
      }
    });
    return s;
  }
  function axisX(x0, y, labels) {
    var s = '';
    labels.forEach(function (t, i) {
      var x = x0 + i * 48.3;
      s += '<path d="M' + (Math.round(x) + 0.5) + ' ' + y + 'v3" stroke="#ddd"/>' + text(fmt(x), y + 8.500, t);
    });
    return s;
  }
  function ohlc(x, y, t) {
    return '<path d="M' + x + ' ' + (y + 2) + 'l3-3 3 3z" fill="#eee"/>' + '<text x="' + (x + 8) + '" y="' + (y + 3) + '" font-size="7.050" fill="#eee" xml:space="preserve">' + t + '</text>';
  }
  function frame(x0, x1, top, bottom) {
    return '<rect x="' + (x0 + 0.5) + '" y="' + (top + 0.5) + '" width="' + (x1 - x0) + '" height="' + (bottom - top) + '" fill="none" stroke="#b4b4b4"/>';
  }
  var times = ['19 Jun 2015', '24 Jun 04:00', '26 Jun 20:00', '1 Jul 12:00', '6 Jul 04:00', '8 Jul 20:00', '13 Jul 12:00', '16 Jul 04:00', '20 Jul 20:00', '23 Jul 12:00', '28 Jul 04:00', '30 Jul 20:00', '4 Aug 12:00'];
  var upperYs = [98, 122.5, 147.5, 172, 196.5, 221.5, 246, 270.5, 295.5, 320];
  var lowerYs = [380, 405, 430, 454.5, 479.5, 504.5, 529];
  function set(id, vb, body) {
    var el = document.getElementById(id);
    el.setAttribute('viewBox', vb);
    el.innerHTML = body;
  }

  /* EURUSD */
  var p1 = [[152, 190], [165, 175], [180, 150], [300, 150], [440, 150], [470, 140], [490, 112], [505, 118], [520, 135], [600, 170], [755, 285]];
  set('c1', '150 83 637 258',
    grid(152, 755, upperYs, 85, 326) + candles(p1, 152, 755, 10) + frame(152, 755, 85, 326) +
    '<path d="M152 285.500H755" stroke="#778899"/>' +
    axisY(755, [['1.11270', 98], ['1.10910', 122.5], ['1.10550', 147.5], ['1.10180', 172], ['1.09820', 196.5], ['1.09460', 221.5], ['1.09100', 246], ['1.08740', 270.5], ['1.08555', 285, 1], ['1.08380', 295.5], ['1.08020', 320]]) +
    axisX(152, 326, times) + ohlc(155, 88, 'EURUSD,H4  1.08666 1.08767 1.08511 1.08555'));

  /* GBPUSD */
  var p2 = [[804, 150], [830, 140], [845, 158], [860, 168], [880, 165], [900, 165], [930, 162], [942, 172], [948, 198], [960, 212], [985, 215], [1002, 230], [1010, 215], [1020, 240], [1030, 270], [1040, 305], [1060, 316], [1080, 285], [1110, 262], [1120, 205], [1160, 200], [1200, 222], [1250, 245], [1270, 255], [1295, 205], [1340, 205], [1370, 210], [1405, 235]];
  var ma2 = [[858, 143], [873, 166], [900, 167], [945, 172], [985, 207], [1005, 217], [1018, 221], [1030, 240], [1042, 268], [1052, 300], [1065, 313], [1085, 290], [1110, 250], [1130, 222], [1150, 205], [1185, 208], [1215, 225], [1260, 245], [1285, 235], [1320, 215], [1370, 208], [1405, 224]];
  set('c2', '802 83 636 258',
    grid(803.5, 1406, upperYs, 85, 326) + '<path d="M804 226.500H1406" stroke="#778899"/>' + bars(p2, 804, 1406, 4.03, 14) +
    line(smooth(ma2, 5), '#c41414', 1.1) + frame(804, 1406, 85, 326) +
    axisY(1406, [['1.59065', 98], ['1.58405', 122.5], ['1.57760', 147.5], ['1.57100', 172], ['1.56450', 196.5], ['1.55800', 216], ['1.55711', 226, 1], ['1.55150', 246], ['1.54495', 270.5], ['1.53845', 295.5], ['1.53185', 320]]) +
    axisX(804, 326, times) + ohlc(806, 88, 'GBPUSD,H4  1.55410 1.55883 1.55339 1.55711'));

  /* USDCHF + MACD */
  var p3 = [[152, 515], [165, 522], [175, 505], [190, 482], [205, 490], [225, 488], [250, 480], [270, 490], [290, 475], [320, 478], [350, 465], [380, 470], [410, 458], [440, 452], [470, 440], [500, 425], [530, 420], [570, 418], [620, 425], [660, 420], [700, 415], [730, 410], [755, 400]];
  var hist = [[152, 605], [186, 604], [189, 577], [195, 565], [203, 553], [225, 547], [240, 548], [255, 558], [265, 575], [268, 580], [290, 582], [298, 570], [313, 538], [330, 548], [345, 556], [370, 558], [400, 557], [420, 562], [430, 577], [440, 587], [450, 578], [460, 563], [500, 550], [540, 538], [560, 555], [600, 570], [640, 576], [680, 570], [720, 562], [747, 545]];
  var sig = [[152, 607], [180, 600], [200, 570], [215, 555], [240, 549], [250, 548], [270, 552], [285, 565], [295, 577], [315, 560], [330, 543], [345, 548], [380, 560], [420, 565], [440, 578], [460, 570], [500, 555], [540, 545], [570, 560], [600, 573], [650, 573], [700, 565], [745, 555]];
  var hs = '';
  for (var x = 152.5; x < 750; x += 4.03) {
    var y = fmt(interp(hist, x) + (rnd() - 0.5) * 1.5), X = Math.round(x) + 0.5;
    hs += 'M' + X + ' 577V' + y;
  }
  set('c3', '150 371 637 257',
    grid(152, 755, lowerYs, 373, 530) + bars(p3, 152, 755, 4.03, 13) + frame(152, 755, 373, 530) +
    '<rect x="150" y="530" width="637" height="2" fill="#777"/>' +
    grid(152, 755, [], 533, 613) + '<path d="' + hs + '" stroke="#9a9a9a" stroke-width="2" fill="none"/>' +
    line(smooth(sig, 6), '#e01c1c', 1.2, '2 2') + frame(152, 755, 533, 613) +
    axisY(755, [['0.97948', 380], ['0.96920', 404], ['0.95840', 428], ['0.94760', 453], ['0.93650', 477], ['0.92570', 503], ['0.91490', 528], ['0.004271', 538], ['0.00', 577], ['-0.003408', 606]]) +
    axisX(152, 613, times) + ohlc(155, 376, 'USDCHF,H4  0.97941 0.97948 0.97941 0.97941') +
    text(155, 541, 'MACD(12,26,9) 0.003411 0.002056'));

  /* USDJPY + CCI */
  var p4 = [[804, 475], [815, 490], [822, 510], [830, 490], [845, 488], [860, 470], [880, 455], [900, 445], [920, 440], [945, 425], [960, 412], [975, 404], [992, 398], [1000, 400], [1008, 452], [1020, 445], [1030, 458], [1050, 437], [1070, 438], [1100, 437], [1118, 445], [1130, 460], [1150, 500], [1170, 490], [1190, 450], [1230, 420], [1260, 392], [1275, 430], [1300, 440], [1330, 425], [1375, 435], [1380, 402], [1405, 398]];
  var cci = [[805, 560], [815, 570], [830, 565], [850, 555], [860, 540], [880, 550], [900, 555], [930, 548], [950, 550], [965, 541], [985, 555], [1000, 555], [1010, 590], [1015, 600], [1030, 600], [1040, 590], [1060, 595], [1075, 560], [1090, 575], [1105, 570], [1120, 590], [1130, 605], [1150, 608], [1160, 590], [1175, 570], [1190, 590], [1210, 565], [1235, 555], [1250, 570], [1280, 570], [1300, 575], [1320, 560], [1340, 575], [1370, 570], [1378, 538], [1390, 545], [1400, 552]];
  var times4 = ['19 Jun 2015', '15 Jul 08:00', '16 Jul 16:00', '20 Jul 00:00', '21 Jul 08:00', '22 Jul 16:00', '24 Jul 00:00', '27 Jul 08:00', '28 Jul 16:00', '30 Jul 00:00', '31 Jul 08:00', '3 Aug 16:00', '5 Aug 00:00'];
  set('c4', '802 371 636 257',
    grid(803.5, 1406, lowerYs, 373, 530) + '<path d="M804 395.500H1406" stroke="#778899"/>' + candles(p4, 804, 1406, 14) + frame(804, 1406, 373, 530) +
    '<rect x="802" y="530" width="636" height="2" fill="#777"/>' +
    grid(803.5, 1406, [557, 576, 594], 533, 613) + line(jitter(cci, 6, 7), '#1c9a9a', 1.1) + frame(804, 1406, 533, 613) +
    axisY(1406, [['124.585', 380], ['124.410', 395, 1], ['124.305', 405], ['124.020', 430], ['123.740', 454.5], ['123.455', 479.5], ['123.175', 504.5], ['122.890', 528], ['226.6122', 538], ['100', 557], ['0', 576], ['-100', 594], ['-222.252', 606]]) +
    axisX(804, 613, times4) + ohlc(806, 376, 'USDJPY,H4  124.380 124.426 124.309 124.410') +
    text(806, 541, 'CCI(14) 131.5860'));

  /* tick chart in the order dialog */
  function z(a) { return a.map(function (p) { return [fmt(180 + p[0] / 3), fmt(125 + p[1] / 3)]; }); }
  var red = z([[55, 245], [65, 320], [78, 490], [85, 375], [95, 390], [100, 345], [107, 565], [115, 500], [128, 310], [150, 300], [170, 195], [185, 265], [197, 390], [215, 250], [228, 220], [242, 340], [250, 295], [270, 340], [282, 270], [290, 295], [620, 295]]);
  var blue = z([[55, 560], [65, 560], [78, 740], [85, 695], [100, 645], [110, 770], [118, 770], [130, 595], [148, 615], [168, 470], [180, 545], [195, 665], [215, 545], [230, 560], [240, 620], [247, 545], [255, 620], [270, 615], [282, 570], [290, 590], [620, 592]]);
  var t = '<path d="M195.500 408V162.500H419" fill="none" stroke="#999"/>';
  for (var gx = 222.5; gx < 387; gx += 24) t += '<path d="M' + gx + ' 165V405" stroke="#c8c8c8" stroke-dasharray="2 3"/>';
  [187, 211, 235, 260, 284, 308, 332, 356, 380].forEach(function (gy) { t += '<path d="M198 ' + (gy + 0.5) + 'H387" stroke="#d4d4d4" stroke-dasharray="2 3"/>'; });
  t += line(red, '#ff8a8a', 1.1) + line(blue, '#4d80ff', 1.1);
  t += '<rect x="197" y="165" width="189.500" height="240" fill="none" stroke="#333" stroke-width="1.500"/>';
  t += '<text x="200" y="173" font-size="' + FS + '" fill="#222">EURUSD</text>';
  [['1.08571', 187], ['1.08568', 211], ['1.08565', 235], ['1.08562', 260], ['1.08560', 284], ['1.08557', 308], ['1.08554', 332], ['1.08551', 356], ['1.08548', 380], ['1.08545', 403]].forEach(function (l) {
    t += '<text x="391" y="' + (l[1] + 2.500) + '" font-size="' + FS + '" fill="#222">' + l[0] + '</text>';
  });
  t += '<rect x="387.500" y="219.500" width="31" height="8" fill="#f86a6a"/><text x="391" y="226" font-size="' + FS + '" fill="#fff">1.08567</text>';
  t += '<rect x="387.500" y="318" width="31" height="8" fill="#2a62f0"/><text x="391" y="324.500" font-size="' + FS + '" fill="#fff">1.08555</text>';
  document.getElementById('tick').innerHTML = t;
})();
```
